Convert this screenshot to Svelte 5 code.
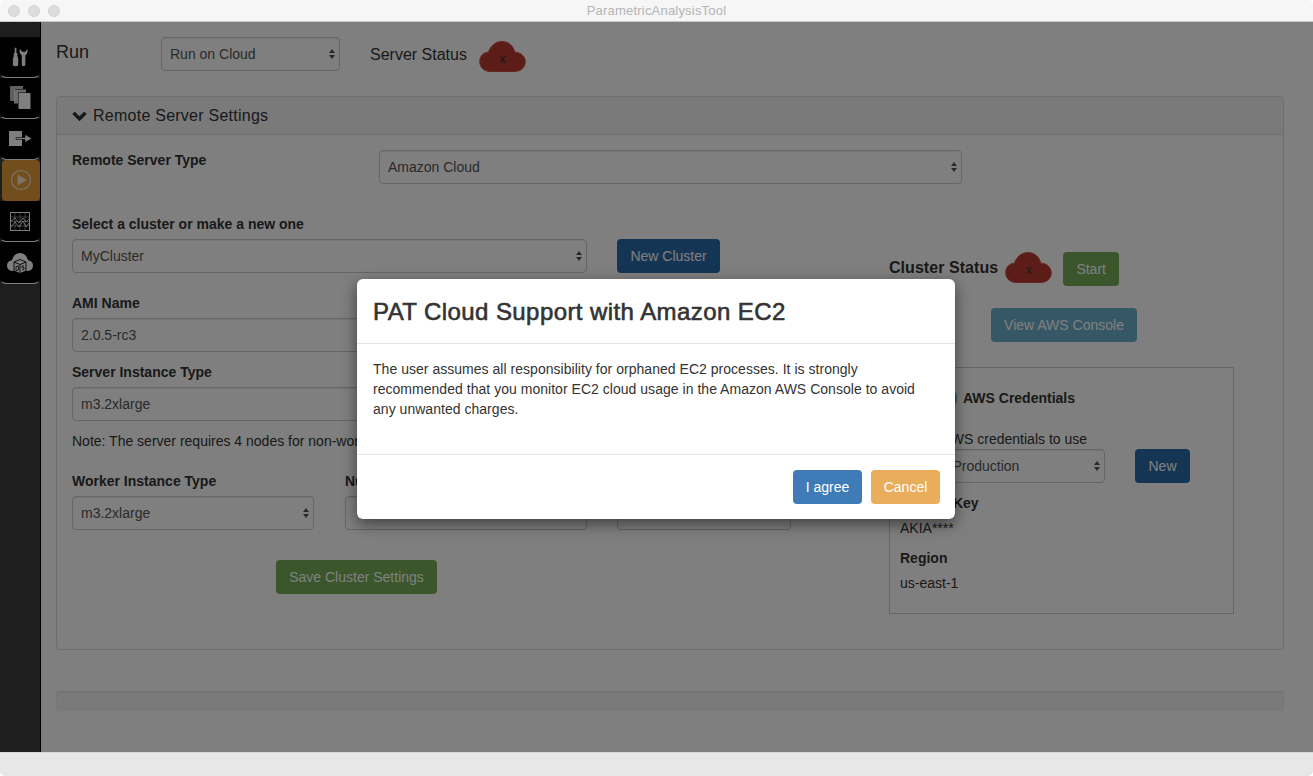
<script lang="ts">
	const navItems = ['tools', 'files', 'import', 'run', 'results', 'server'];
	const active = 'run';
</script>

{#snippet cloud()}
	<span class="cloud">
		<svg width="47" height="31" viewBox="-.5 -.5 48 32">
			<path d="M11 31C4 31 0 26 0 21C0 15 4 11 9 11C11 5 16 0 23 0C30 0 35 5 36 11C42 11 47 15 47 21C47 27 42 31 36 31Z" />
		</svg>
		<span class="cloud-x">x</span>
	</span>
{/snippet}

<div class="window">
	<header class="titlebar">
		<div class="lights"><i></i><i></i><i></i></div>
		<span class="title">ParametricAnalysisTool</span>
	</header>

	<div class="body">
		<nav class="sidebar">
			{#each navItems as item}
				<div class="nav-item" class:active={item === active}>
					{#if item === 'tools'}
						<svg width="16" height="20" viewBox="0 0 18 21">
							<path d="M3 0h2v6h1v4l1 2v7a2 2 0 0 1-2 2H3a2 2 0 0 1-2-2v-7l1-2V6h1z" />
							<path d="M9 1.500C8 4 8.500 7 11 8.500V19a2 2 0 0 0 4 0V8.500C17.500 7 18 4 17 1.500L15 4.500h-3.500z" />
						</svg>
					{:else if item === 'files'}
						<svg width="21" height="23" viewBox="0 0 21 23">
							<path d="M0 0h13v3H5v12H0z" opacity=".75" />
							<path d="M4 3.500h12v3H8v11H4z" opacity=".85" />
							<rect x="8.500" y="7" width="12" height="16" />
						</svg>
					{:else if item === 'import'}
						<svg width="23" height="16" viewBox="0 0 23 16">
							<rect x="0" y="0" width="13" height="15" />
							<path d="M7 6.500h9V3.500L23 7.500l-7 4V8.500H7z" stroke="#000" stroke-width=".6" />
						</svg>
					{:else if item === 'run'}
						<svg class="outline" width="22" height="22" viewBox="0 0 22 22">
							<circle cx="11" cy="11" r="9.500" />
							<path class="solid" d="M7.500 5.500L17 11l-9.500 5.500z" />
						</svg>
					{:else if item === 'results'}
						<svg class="outline thin" width="20" height="19" viewBox="0 0 20 19">
							<rect x=".5" y=".5" width="19" height="18" />
							<path d="M.5 5h19M.5 9.500h19M.5 14h19M5 .5v18M10 .5v18M15 .5v18" opacity=".45" />
							<path d="M1 9l4-3 4 5 4-5 3 4 3-3M1 15l4-5 4 5 4-6 3 6 3-4" opacity=".85" />
						</svg>
					{:else}
						<svg width="26" height="21" viewBox="0 0 26 21">
							<path d="M6 18C2 18 0 15.500 0 12.500C0 9.500 2 7.500 5 7.200C6 3 9 0 13 0C17 0 20 3 21 7.200C24 7.500 26 9.500 26 12.500C26 15.500 24 18 20 18Z" />
							<path class="box" d="M7 9l6-2.500 6 2.500v9l-6 2.500L7 18z" />
							<path class="cutout" d="M7 9l6-2.500 6 2.500v9l-6 2.500L7 18zM7 9l6 2.500 6-2.500M13 11.500v9" />
							<path class="glyph" d="M9 13.500l2.500-.5v4l-2.500.5zM17 12.500l-2 .5v1.800l2-.5v2l-2 .5" />
						</svg>
					{/if}
				</div>
			{/each}
		</nav>

		<main class="main">
			<div class="run-row">
				<h1>Run</h1>
				<div class="select run-select">
					<select><option>Run on Cloud</option></select>
				</div>
				<span class="server-status">Server Status</span>
				{@render cloud()}
			</div>

			<section class="panel">
				<div class="panel-heading">
					<svg width="15" height="10" viewBox="0 0 15 10"><path d="M1.500 1.800L7.500 7.800l6-6" /></svg>
					<span>Remote Server Settings</span>
				</div>
				<div class="panel-body">
					<div class="type-row">
						<label for="server-type">Remote Server Type</label>
						<div class="select type-select">
							<select id="server-type"><option>Amazon Cloud</option></select>
						</div>
					</div>

					<div class="columns">
						<div class="left">
							<label for="cluster">Select a cluster or make a new one</label>
							<div class="cluster-row">
								<div class="select wide"><select id="cluster"><option>MyCluster</option></select></div>
								<button class="btn primary new-cluster">New Cluster</button>
							</div>

							<label class="gap-20" for="ami">AMI Name</label>
							<div class="select wide"><select id="ami"><option>2.0.5-rc3</option></select></div>

							<label class="gap-10" for="server-instance">Server Instance Type</label>
							<div class="select wide"><select id="server-instance"><option>m3.2xlarge</option></select></div>

							<p class="note">Note: The server requires 4 nodes for non-worker processes.</p>

							<div class="worker-row">
								<div class="field w242">
									<label for="worker-type">Worker Instance Type</label>
									<div class="select"><select id="worker-type"><option>m3.2xlarge</option></select></div>
								</div>
								<div class="field w242 second">
									<label for="workers">Number of Workers</label>
									<input id="workers" type="text" />
								</div>
								<div class="field w174">
									<label for="price">Worker Price</label>
									<input id="price" type="text" />
								</div>
							</div>

							<button class="btn success save">Save Cluster Settings</button>
						</div>

						<aside class="right">
							<div class="status-row">
								<span class="cluster-status">Cluster Status</span>
								{@render cloud()}
								<button class="btn success start">Start</button>
							</div>
							<button class="btn info console">View AWS Console</button>

							<div class="cred-box">
								<div class="cred-head">
									<span class="round-btn"></span>
									<b>AWS Credentials</b>
								</div>
								<div class="cred-label">Select AWS credentials to use</div>
								<div class="cred-row">
									<div class="select cred-select"><select><option>Cloud Production</option></select></div>
									<button class="btn primary new">New</button>
								</div>
								<div class="cred-key"><b>Access Key</b></div>
								<div class="cred-value">AKIA****</div>
								<div class="cred-key region"><b>Region</b></div>
								<div class="cred-value">us-east-1</div>
							</div>
						</aside>
					</div>
				</div>
			</section>

			<div class="progress"></div>
		</main>

		<div class="backdrop">
			<div class="modal">
				<div class="modal-header"><h4>PAT Cloud Support with Amazon EC2</h4></div>
				<div class="modal-body">
					The user assumes all responsibility for orphaned EC2 processes. It is strongly recommended that you monitor EC2 cloud usage in the Amazon AWS Console to avoid any unwanted charges.
				</div>
				<div class="modal-footer">
					<button class="btn agree">I agree</button>
					<button class="btn cancel">Cancel</button>
				</div>
			</div>
		</div>
	</div>

	<footer class="statusbar"></footer>
</div>

<style>
	:global(body) {
		margin: 0;
		background: #fff;
	}
	* {
		box-sizing: border-box;
	}
	.window {
		width: 1313px;
		height: 776px;
		display: flex;
		flex-direction: column;
		overflow: hidden;
		border-radius: 5px;
		font-family: "Liberation Sans", Arial, sans-serif;
		font-size: 14px;
		line-height: 20px;
		color: #333;
	}
	.titlebar {
		height: 22px;
		flex: none;
		position: relative;
		display: flex;
		align-items: center;
		justify-content: center;
		background: #f6f6f6;
		border-bottom: 1px solid #c9c9c9;
	}
	.lights {
		position: absolute;
		left: 8px;
		top: 5px;
		display: flex;
		gap: 8px;
	}
	.lights i {
		width: 12px;
		height: 12px;
		border-radius: 50%;
		background: #dcdcdc;
		border: 1px solid #d2d2d2;
	}
	.title {
		font-size: 13px;
		letter-spacing: 0.2px;
		color: #b4b4b4;
	}
	.body {
		height: 730px;
		flex: none;
		position: relative;
		display: flex;
	}
	.statusbar {
		flex: 1;
		background: #e7e7e7;
		border-top: 1px solid #d8d8d8;
	}

	.sidebar {
		width: 41px;
		flex: none;
		padding-top: 15px;
		background: #3c3c3c;
		border-right: 1px solid #000;
	}
	.nav-item {
		height: 41px;
		display: flex;
		align-items: center;
		justify-content: center;
		background: #000;
		padding-bottom: 2px;
		border: 1px solid transparent;
		border-bottom-color: #fff;
		border-radius: 0 0 6px 6px;
	}
	.nav-item:nth-child(5) {
		padding: 0;
	}
	.nav-item:nth-child(6) {
		height: 42px;
		padding-bottom: 0;
	}
	.nav-item.active {
		background: #e69c3a;
		border: 0;
		border-radius: 4px;
		margin: 0 0 0 2px;
		padding-bottom: 1px;
	}
	.nav-item svg {
		fill: #fff;
	}
	.nav-item svg .box {
		fill: #fff;
		stroke: none;
	}
	.nav-item svg .cutout {
		fill: none;
		stroke: #000;
		stroke-width: 0.9;
	}
	.nav-item svg .glyph {
		fill: none;
		stroke: #000;
		stroke-width: 0.8;
	}
	.nav-item .outline {
		fill: none;
		stroke: #fff;
		stroke-width: 1.2;
		opacity: 0.75;
	}
	.nav-item .outline .solid {
		fill: #fff;
		stroke: none;
	}
	.nav-item .thin {
		opacity: 1;
		stroke-width: 1;
	}

	.main {
		flex: 1;
		min-width: 0;
		background: #fff;
		padding: 15px 29px 0 15px;
	}
	.run-row {
		height: 34px;
		display: flex;
		align-items: flex-start;
	}
	h1 {
		margin: 5px 0 0;
		width: 105px;
		font-size: 18px;
		font-weight: 400;
		line-height: 20px;
	}
	.server-status {
		margin: 8px 12px 0 30px;
		font-size: 16px;
		line-height: 20px;
	}
	.run-row .cloud {
		margin-top: 4px;
	}

	.select {
		position: relative;
		height: 34px;
	}
	.select::before,
	.select::after {
		content: "";
		position: absolute;
		right: 5px;
		border-left: 3.500px solid transparent;
		border-right: 3.500px solid transparent;
		pointer-events: none;
	}
	.select::before {
		top: 12px;
		border-bottom: 4.500px solid #555;
	}
	.select::after {
		top: 18px;
		border-top: 4.500px solid #555;
	}
	select,
	input {
		display: block;
		width: 100%;
		height: 34px;
		margin: 0;
		padding: 6px 12px 6px 8px;
		appearance: none;
		background: #fff;
		border: 1px solid #ccc;
		border-radius: 4px;
		box-shadow: inset 0 1px 1px rgba(0, 0, 0, 0.075);
		font: inherit;
		color: #555;
	}
	.run-select {
		width: 179px;
	}
	.wide {
		width: 515px;
	}

	label,
	b {
		font-weight: 700;
	}
	label {
		display: block;
		margin-bottom: 5px;
	}

	.panel {
		height: 554px;
		margin-top: 25px;
		background: #fff;
		border: 1px solid #ddd;
		border-radius: 4px;
	}
	.panel-heading {
		height: 38px;
		display: flex;
		align-items: center;
		gap: 6px;
		padding: 1px 15px 0;
		background: #f5f5f5;
		border-bottom: 1px solid #ddd;
		border-radius: 3px 3px 0 0;
		font-size: 16px;
		letter-spacing: 0.25px;
	}
	.panel-heading svg {
		fill: none;
		stroke: #333;
		stroke-width: 3.400;
	}
	.panel-body {
		padding: 15px 15px;
	}
	.type-row {
		display: flex;
	}
	.type-row label {
		width: 307px;
		margin: 0;
	}
	.type-select {
		width: 583px;
	}
	.type-select select {
		padding-bottom: 8px;
	}
	.columns {
		display: flex;
		margin-top: 30px;
	}
	.left {
		width: 817px;
		flex: none;
	}
	.cluster-row {
		display: flex;
		gap: 30px;
	}
	.gap-20 {
		margin-top: 20px;
	}
	.gap-10 {
		margin-top: 10px;
	}
	.note {
		margin: 10px 0 0;
	}
	.worker-row {
		display: flex;
		gap: 30px;
		margin-top: 20px;
	}
	.second {
		margin-left: 1px;
	}
	.w242 {
		width: 242px;
	}
	.w174 {
		width: 174px;
	}

	.btn {
		height: 34px;
		padding: 6px 12px;
		border: 1px solid transparent;
		border-radius: 4px;
		font: inherit;
		color: #fff;
		white-space: nowrap;
	}
	.primary {
		background: #2b6ba8;
	}
	.success {
		background: #74ad55;
	}
	.info {
		background: #6cb0cc;
	}
	.new-cluster {
		width: 103px;
		padding: 0;
	}
	.save {
		width: 161px;
		padding: 0;
		margin: 30px 0 0 204px;
		display: block;
	}

	.right {
		width: 345px;
		flex: none;
		padding-top: 38px;
	}
	.status-row {
		display: flex;
		align-items: flex-start;
	}
	.cluster-status {
		margin-top: 6px;
		font-size: 16px;
		font-weight: 700;
		letter-spacing: 0.05px;
	}
	.status-row .cloud {
		margin: 0 11px 0 7px;
	}
	.start {
		width: 56px;
		padding: 0;
	}
	.console {
		display: block;
		width: 146px;
		padding: 0;
		margin: 22px 0 0 102px;
	}
	.cred-box {
		height: 247px;
		margin-top: 25px;
		padding: 0 10px;
		border: 1px solid #ccc;
	}
	.cred-head {
		display: flex;
		align-items: center;
		height: 26px;
		margin-top: 17px;
		gap: 6px;
	}
	.round-btn {
		width: 26px;
		height: 26px;
		margin-left: 31px;
		border-radius: 50%;
		background: #6cb0cc;
	}
	.cred-label {
		margin-top: 18px;
	}
	.cred-row {
		display: flex;
		gap: 30px;
	}
	.cred-select {
		width: 205px;
	}
	.cred-select select {
		padding-left: 11px;
	}
	.new {
		width: 55px;
		padding: 0;
	}
	.cred-key {
		margin-top: 10px;
	}
	.cred-value {
		margin-top: 5px;
	}
	.region {
		margin-top: 10px;
	}

	.cloud {
		position: relative;
		display: block;
		width: 47px;
		height: 31px;
		flex: none;
	}
	.cloud svg {
		display: block;
		fill: #b83a30;
		stroke: #c94a40;
	}
	.cloud-x {
		position: absolute;
		left: 0;
		right: 0;
		top: 8px;
		text-align: center;
		font-size: 12px;
		line-height: 20px;
		color: #333;
	}

	.progress {
		height: 20px;
		margin-top: 41px;
		background: #f5f5f5;
		border-radius: 4px;
		box-shadow: inset 0 1px 2px rgba(0, 0, 0, 0.1);
	}

	.backdrop {
		position: absolute;
		inset: 0;
		background: rgba(0, 0, 0, 0.5);
	}
	.modal {
		width: 598px;
		height: 240px;
		margin: 257px 0 0 357px;
		background: #fff;
		border-radius: 6px;
		box-shadow: 0 5px 15px rgba(0, 0, 0, 0.5);
	}
	.modal-header {
		height: 65px;
		padding: 16px;
		border-bottom: 1px solid #e5e5e5;
	}
	h4 {
		margin: 0;
		font-size: 24px;
		font-weight: 400;
		line-height: 33px;
		letter-spacing: 0.42px;
		-webkit-text-stroke: 0.6px #333;
	}
	.modal-body {
		height: 110px;
		padding: 15px 16px;
		letter-spacing: 0.03px;
	}
	.modal-footer {
		display: flex;
		justify-content: flex-end;
		gap: 9px;
		padding: 15px 15px;
		border-top: 1px solid #e5e5e5;
	}
	.agree {
		width: 69px;
		padding: 0;
		background: #3f7cb7;
	}
	.cancel {
		width: 69px;
		padding: 0;
		background: #e9ad5b;
	}
</style>
